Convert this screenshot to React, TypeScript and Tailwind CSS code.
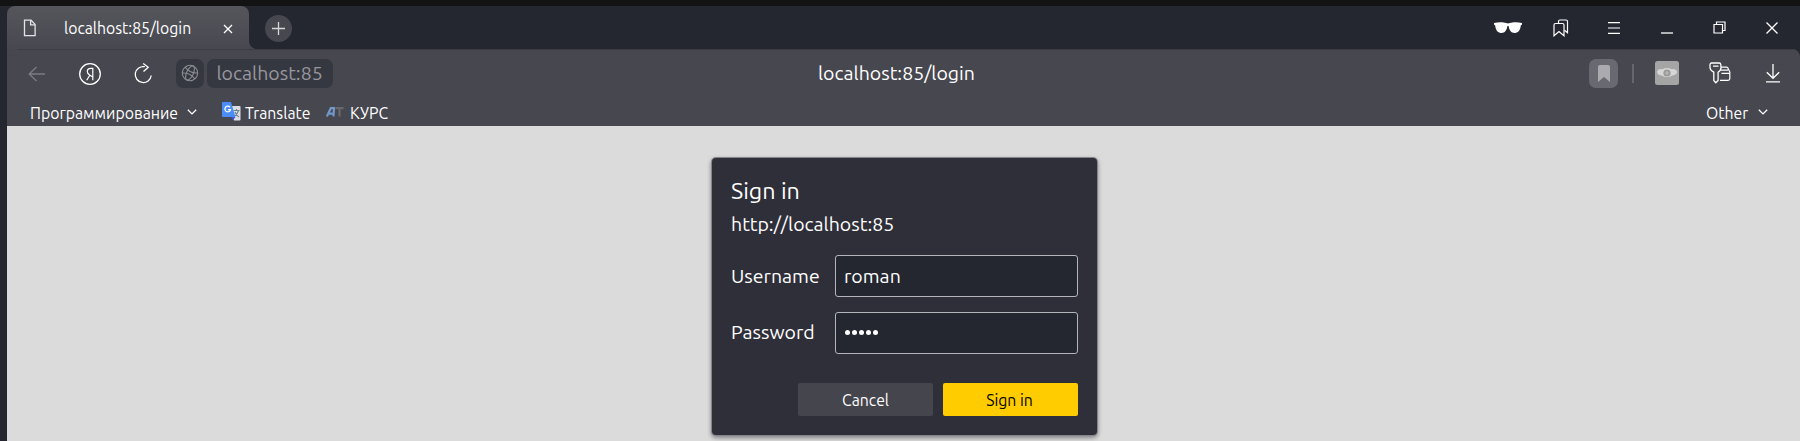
import React from "react";

type IconProps = { w: number; h: number; className?: string; children: React.ReactNode };

function Icon({ w, h, className = "", children }: IconProps) {
  return (
    <svg width={w} height={h} viewBox={`0 0 ${w} ${h}`} fill="none" stroke="currentColor" strokeWidth="1.3" className={`shrink-0 ${className}`}>
      {children}
    </svg>
  );
}

function Chevron() {
  return (
    <Icon w={10} h={6}>
      <path d="M.8.7 5 4.9 9.2.7" />
    </Icon>
  );
}

function Cell({ children }: { children: React.ReactNode }) {
  return <div className="flex h-full w-[53px] shrink-0 items-center justify-center">{children}</div>;
}

function TabStrip() {
  return (
    <div className="flex h-[43px] items-stretch bg-[#242630]">
      <div className="flex w-[242px] shrink-0 items-center rounded-t-[8px] bg-linear-to-b from-[#55555c] to-[#484850] pl-[16px]">
        <Icon w={14} h={18} className="mt-px text-[#e4e4e6]">
          <path d="M1.5 1.2h6.6l4 4.2v11.2H1.500z" />
          <path d="M7.600 1.200v4.600h4.500" />
        </Icon>
        <span className="ml-[27px] w-[128px] shrink-0 text-[15.8px] leading-[22px] whitespace-nowrap">localhost:85/login</span>
        <Icon w={10} h={10} className="mt-[2px] ml-[31px]">
          <path d="m1 1 8 8M9 1 1 9" />
        </Icon>
      </div>
      <div className="flex w-[8px] bg-[#47474f]">
        <div className="w-full rounded-bl-[8px] bg-[#242630]" />
      </div>
      <div className="mt-[9px] ml-[8px] flex size-[27px] items-center justify-center rounded-full bg-[#47474f] text-[#d5d5d9]">
        <Icon w={13} h={13}>
          <path d="M6.500 0v13M0 6.500h13" />
        </Icon>
      </div>
      <div className="mr-px ml-auto flex">
        <Cell>
          <svg width="28" height="12" viewBox="0 0 28 12" fill="#fff">
            <path d="M0 .9C4-.1 9-.2 12.300 1.100q1.700.6 3.400 0C19-.2 24-.1 28 .9v1.700l-1.200.8c-.4 4.500-2.300 7.200-5.800 7.500-3.800.2-5.800-2.600-6.300-6.700q-.7-.8-1.400 0c-.5 4.100-2.500 6.900-6.300 6.700-3.500-.3-5.400-3-5.800-7.500L0 2.600z" />
          </svg>
        </Cell>
        <Cell>
          <Icon w={16} h={18} className="mt-px">
            <path d="M5.500 4V2.500q0-1.500 1.500-1.500h6q1.500 0 1.500 1.500v11.300l-3-2.600" strokeWidth="1.200" />
            <path d="M1 16.800V6q0-1.500 1.500-1.500h7Q11 4.500 11 6v10.800l-5-4.300z" strokeWidth="1.200" />
          </Icon>
        </Cell>
        <Cell>
          <Icon w={12} h={12}>
            <path d="M0 .7h12M0 6h12M0 11.300h12" strokeWidth="1.200" />
          </Icon>
        </Cell>
        <Cell>
          <Icon w={12} h={12}>
            <path d="M0 11h12" />
          </Icon>
        </Cell>
        <Cell>
          <Icon w={13} h={13}>
            <path d="M3.500 3.500V1h8.500v8.500H9.500M1 3.500h8.500V12H1z" strokeWidth="1.200" />
          </Icon>
        </Cell>
        <Cell>
          <Icon w={12} h={12} className="-ml-px">
            <path d="m.5.500 11 11M11.500.500l-11 11" />
          </Icon>
        </Cell>
      </div>
    </div>
  );
}

function Toolbar() {
  return (
    <div className="grid h-[49px] grid-cols-[786px_220px_1fr] items-center">
      <div className="flex items-center pl-[21px]">
        <Icon w={18} h={16} className="text-[#7c7c84]">
          <path d="M8.500 1 1.200 8l7.300 7M1.200 8H17" />
        </Icon>
        <Icon w={24} h={24} className="mt-px ml-[32px]">
          <circle cx="12" cy="12" r="10.300" />
          <path d="M14.800 18.200V6.300h-2c-2.200 0-3.500 1.200-3.500 3.100 0 1.700 1 2.700 2.300 3.500l3.200 2M11.800 13.200l-3.100 5" strokeWidth="1.200" />
        </Icon>
        <Icon w={18} h={21} className="ml-[32px]">
          <path d="M10.800 3.700A8 8 0 1 0 17.200 12.500" />
          <path d="M9.200.5 14.200 4.300 9.500 8.500" />
        </Icon>
        <div className="ml-[24px] flex h-[29px] w-[28px] shrink-0 items-center justify-center rounded-[7px] bg-[#363841] text-[#8b8b92]">
          <Icon w={18} h={18} className="-mt-px">
            <g transform="rotate(25 9 9)" strokeWidth="1.100">
              <circle cx="9" cy="9" r="7.700" />
              <ellipse cx="9" cy="9" rx="3.300" ry="7.700" />
              <path d="M2.200 5.700Q9 9.500 15.800 5.700M2.200 12.300Q9 8.500 15.800 12.300" />
            </g>
          </Icon>
        </div>
        <div className="ml-[3px] h-[29px] w-[126px] rounded-[7px] bg-[#363841] pl-[9.500px] text-[19.500px] leading-[28px] whitespace-nowrap text-[#97979e]">
          localhost:85
        </div>
      </div>
      <div className="-mt-[2px] pl-[25px] text-[19.500px] leading-[28px] whitespace-nowrap">localhost:85/login</div>
      <div className="flex items-center justify-end">
        <div className="flex h-[29px] w-[29px] items-center justify-center rounded-[7px] bg-[#696971]">
          <svg width="12" height="17" viewBox="0 0 12 17" fill="#aaaaaf">
            <path d="M0 2q0-2 2-2h8q2 0 2 2v15l-6-5-6 5z" />
          </svg>
        </div>
        <div className="ml-[14px] h-[19px] w-[2px] bg-[#65656d]" />
        <div className="ml-[6px] flex pr-px">
          <Cell>
            <svg width="24" height="24" viewBox="0 0 24 24" className="-mt-px">
              <rect width="24" height="24" rx="2.500" fill="#a5a5a5" />
              <path d="M2 10.500Q3 7 7.500 8.200 12 6 16.500 8.200 21 7 22 10.500q0 3.500-4.500 4-5.500 3.500-11 0Q2 14 2 10.500" fill="#d6d6d6" />
              <circle cx="12" cy="12" r="3.600" fill="#999" />
              <circle cx="12" cy="12" r="1.800" fill="#b5b5b5" />
            </svg>
          </Cell>
          <Cell>
            <Icon w={22} h={22}>
              <path d="M2.800 1h7.400q1.500 0 1.600 1.500l.2 3.300q0 2.700-2.900 4.400v8.300l-2.300 2.200-2-2.200v-8.300Q1.300 8.500 1 5.800L1 2.500Q1.100 1 2.800 1M4 4.200h5.500" />
              <path d="M12 5.200h5.300q1.700 0 1.900 1.600l1.600 3.200v6.500q0 1.800-1.800 1.800h-8M11.300 8.200h7.700M13 12v-.7h7.500" strokeWidth="1.200" />
            </Icon>
          </Cell>
          <Cell>
            <Icon w={14} h={19} className="mt-[2px]">
              <path d="M7 0v14M.8 8.300 7 14.300l6.200-6M0 17.800h14" />
            </Icon>
          </Cell>
        </div>
      </div>
    </div>
  );
}

function BookmarksBar() {
  return (
    <div className="flex h-[27px] items-center pr-[32px] pl-[23px] text-[15.8px] leading-[24px] whitespace-nowrap">
      <span className="mt-[2px] w-[148px] shrink-0">Программирование</span>
      <span className="ml-[9px] flex"><Chevron /></span>
      <svg width="19" height="19" viewBox="0 0 19 19" className="ml-[25px] shrink-0">
        <path d="M8 4h9.500q1 0 1 1v12.500q0 1-1 1H12z" fill="#dcdfe2" />
        <path d="M11.500 8.500h6M14.500 7v1.500M16.500 8.500q-1 4-4.500 6M13 10q1.500 3.500 4 5" fill="none" stroke="#6d8289" strokeWidth="1.100" />
        <path d="m9 15 4.500 0-2.800 3.500z" fill="#3a50d8" />
        <path d="M1 0h8l4.500 15H1q-1 0-1-1V1q0-1 1-1" fill="#4b8df8" />
        <path d="M8 5.300A2.800 2.800 0 1 0 8.500 7.600H6" fill="none" stroke="#fff" strokeWidth="1.300" />
      </svg>
      <span className="mt-[2px] ml-[4px] w-[66px] shrink-0">Translate</span>
      <svg width="18" height="10" viewBox="0 0 18 10" className="ml-[15px] shrink-0" fill="none" strokeWidth="2.200">
        <path d="M.8 9.500 4.800 1.200H8L7.500 9.500M2.800 6.700h4.500" stroke="#7198ca" />
        <path d="M9.500 1.200h8M13.500 1v8.500" stroke="#68696d" />
      </svg>
      <span className="mt-[2px] ml-[6px]">КУРС</span>
      <span className="mt-[2px] ml-auto w-[42px] shrink-0">Other</span>
      <span className="ml-[10px] flex"><Chevron /></span>
    </div>
  );
}

function Field({ label, value, password = false }: { label: string; value: string; password?: boolean }) {
  return (
    <label className="flex h-[42px] items-center text-[19.500px]">
      <span className={`w-[104px] shrink-0 whitespace-nowrap ${password ? "" : "pt-px"}`}>{label}</span>
      <span className={`flex h-[42px] w-[243px] items-center rounded-[3px] border border-[#b4b5bb] bg-[#242730] pl-[8px] ${password ? "" : "pt-px"}`}>
        {password ? (
          <span className="-mt-[2px] flex gap-[2px] pl-px">
            {value.split("").map((_, i) => (
              <span key={i} className="size-[5px] rounded-full bg-white" />
            ))}
          </span>
        ) : (
          value
        )}
      </span>
    </label>
  );
}

function SignInDialog() {
  return (
    <div className="mt-[32px] ml-[705px] h-[277px] w-[385px] rounded-[4px] bg-[#2f2f39] px-[19px] pt-[16px] shadow-[0_0_0_1px_#85858b,0_2px_4px_1px_#00000066]">
      <h1 className="h-[32px] text-[23.3px] leading-[32px]">Sign in</h1>
      <p className="h-[30px] text-[19.500px] leading-[36px] whitespace-nowrap">http://localhost:85</p>
      <div className="mt-[19px] flex flex-col gap-[15px]">
        <Field label="Username" value="roman" />
        <Field label="Password" value="12345" password />
      </div>
      <div className="mt-[29px] flex justify-end gap-[10px] text-[15.8px] leading-[33px]">
        <button className="h-[33px] w-[135px] rounded-[2px] bg-[#45454d] pt-px">Cancel</button>
        <button className="h-[33px] w-[135px] rounded-[2px] bg-[#ffcc00] pt-px pr-[2px] text-black">Sign in</button>
      </div>
    </div>
  );
}

export default function App() {
  return (
    <div className="h-[441px] w-[1800px] overflow-hidden bg-[#242630] font-['Ubuntu','Noto_Sans',sans-serif] text-white">
      <div className="h-[6px] bg-[#131313]" />
      <div className="ml-[7px] flex h-[435px] flex-col">
        <TabStrip />
        <div className="rounded-tr-[8px] bg-[#47474f]">
          <div className="mr-[7px] ml-[10px] h-px bg-[#3c3c44]" />
          <div className="-mt-px h-[77px]">
            <Toolbar />
            <BookmarksBar />
          </div>
        </div>
        <div className="flex-1 bg-[#dbdbdb]">
          <div className="flex items-start">
            <SignInDialog />
          </div>
        </div>
      </div>
    </div>
  );
}
